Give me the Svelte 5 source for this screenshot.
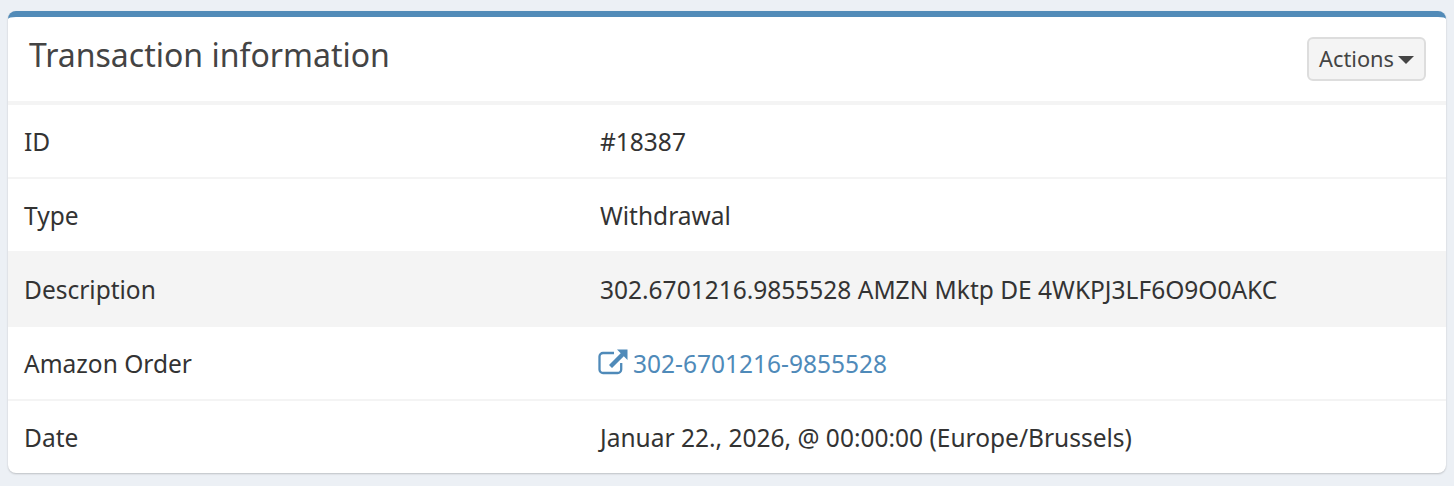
<script>
  const rows = [
    { label: 'ID', value: '#18387' },
    { label: 'Type', value: 'Withdrawal' },
    { label: 'Description', value: '302.6701216.9855528 AMZN Mktp DE 4WKPJ3LF6O9O0AKC', hover: true },
    { label: 'Amazon Order', value: '302-6701216-9855528', link: true },
    { label: 'Date', value: 'Januar 22., 2026, @ 00:00:00 (Europe/Brussels)' }
  ];
</script>

<div class="page">
  <section class="box">
    <header class="box-header">
      <h3>Transaction information</h3>
      <button class="btn" type="button">Actions<span class="caret"></span></button>
    </header>
    <table>
      <tbody>
        {#each rows as row}
          <tr class:hover={row.hover}>
            <td class="label">{row.label}</td>
            <td>
              {#if row.link}
                <a href="#order">
                  <svg class="icon" viewBox="0 0 30 26" width="30" height="26" aria-hidden="true">
                    <path d="M23.200 14v6.500a3.500 3.500 0 0 1-3.500 3.500H5A3.500 3.500 0 0 1 1.500 20.500V7.500A3.500 3.500 0 0 1 5 4h11" fill="none" stroke="currentColor" stroke-width="2.300"/>
                    <path d="M19 0.500H29.500V11L25.800 7.300 14 19 11 16 22.700 4.200Z" fill="currentColor"/>
                  </svg>{row.value}</a>
              {:else}
                {row.value}
              {/if}
            </td>
          </tr>
        {/each}
      </tbody>
    </table>
  </section>
</div>

<style>
  :global(body) {
    margin: 0;
    background: #ecf0f5;
  }
  .page {
    padding: 11px 8px 0;
    height: 475px;
    font-family: "Noto Sans", sans-serif;
    color: #333;
  }
  .box {
    background: #fff;
    border-top: 6px solid #528bb8;
    border-radius: 8px;
    box-shadow: 0 1px 2px rgba(0, 0, 0, 0.2);
    overflow: hidden;
  }
  .box-header {
    display: flex;
    justify-content: space-between;
    align-items: flex-start;
    height: 84px;
    padding: 0 20px 0 21px;
    border-bottom: 4px solid #f4f4f4;
    box-sizing: content-box;
  }
  h3 {
    margin: 16px 0 0;
    font-size: 32px;
    line-height: 44px;
    font-weight: 400;
    color: #444;
  }
  .btn {
    display: flex;
    align-items: center;
    margin-top: 20px;
    height: 44px;
    width: 119px;
    padding: 0 10px 1px;
    box-sizing: border-box;
    background: #f4f4f4;
    border: 2px solid #ddd;
    border-radius: 6px;
    font: inherit;
    font-size: 21.800px;
    color: #444;
  }
  .caret {
    margin-left: 4px;
    margin-top: 3px;
    border-top: 8px solid #444;
    border-left: 8px solid transparent;
    border-right: 8px solid transparent;
  }
  table {
    width: 100%;
    border-collapse: collapse;
    table-layout: fixed;
    font-size: 24.500px;
  }
  tr + tr td {
    border-top: 2px solid #f4f4f4;
  }
  td {
    height: 72px;
    padding: 0 16px;
    box-sizing: content-box;
  }
  .label {
    width: 544px;
  }
  .hover td {
    background: #f4f4f4;
  }
  a {
    color: #4f8ab9;
    text-decoration: none;
  }
  .icon {
    vertical-align: -2px;
    margin: 0 5px 0 -2px;
  }
</style>
